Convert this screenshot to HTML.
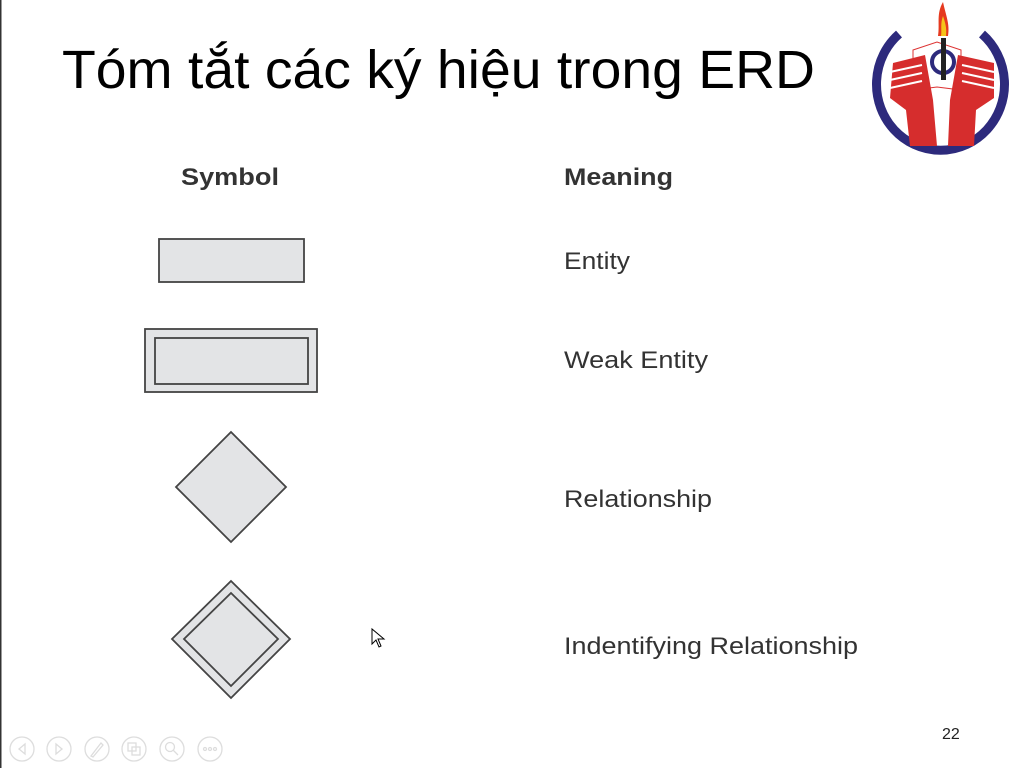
<!DOCTYPE html><html><head><meta charset="utf-8"><style>html,body{margin:0;padding:0;background:#fff}svg{display:block}</style></head><body>
<svg width="1024" height="768" xmlns="http://www.w3.org/2000/svg">
<rect x="0" y="0" width="1.5" height="768" fill="#333"/>
<text x="62" y="88" font-family="Liberation Sans, sans-serif" font-size="54" fill="#000" textLength="753" lengthAdjust="spacingAndGlyphs">Tóm tắt các ký hiệu trong ERD</text>
<g font-family="Liberation Sans, sans-serif" fill="#333">
<text x="181" y="185" font-size="24" font-weight="bold" textLength="98" lengthAdjust="spacingAndGlyphs">Symbol</text>
<text x="564" y="185" font-size="24" font-weight="bold" textLength="109" lengthAdjust="spacingAndGlyphs">Meaning</text>
<text x="564" y="269" font-size="24" textLength="66" lengthAdjust="spacingAndGlyphs">Entity</text>
<text x="564" y="368" font-size="24" textLength="144" lengthAdjust="spacingAndGlyphs">Weak Entity</text>
<text x="564" y="507" font-size="24" textLength="148" lengthAdjust="spacingAndGlyphs">Relationship</text>
<text x="564" y="654" font-size="24" textLength="294" lengthAdjust="spacingAndGlyphs">Indentifying Relationship</text>
</g>
<g stroke="#444" stroke-width="1.8" fill="#e3e4e6">
<rect x="159" y="239" width="145" height="43"/>
<rect x="145" y="329" width="172" height="63"/>
<rect x="155" y="338" width="153" height="46"/>
<polygon points="231,432 286,487 231,542 176,487"/>
<polygon points="231,581 290,639 231,698 172,639"/>
<polygon points="231,593 278,639 231,686 184,639"/>
</g>
<path d="M372,629 L372,644 L376,640 L379,647 L381,646 L378,639 L384,639 Z" fill="#fff" stroke="#000" stroke-width="1"/>
<text x="942" y="739" font-family="Liberation Sans, sans-serif" font-size="16" fill="#222">22</text>
<path d="M899,34 A64,66 0 1 0 982,34" fill="none" stroke="#2d2a7c" stroke-width="9"/>
<path d="M913,50 L937,42 L961,50 L961,90 L937,87 L913,90 Z" fill="#fff" stroke="#d33" stroke-width="1"/>
<circle cx="943" cy="62" r="11" fill="none" stroke="#2d2a7c" stroke-width="4"/>
<rect x="941" y="38" width="5" height="42" fill="#222"/>
<path d="M943,2 C936,14 940,24 938,36 L948,36 C950,24 946,16 943,2Z" fill="#e63a1f"/>
<path d="M943,16 C940,24 942,30 941,36 L946,36 C947,28 945,22 943,16Z" fill="#f5c41a"/>
<path d="M893,63 L925,55 L933,100 L937,146 L910,146 L906,110 L890,98 Z" fill="#d62d2d"/>
<path d="M994,63 L958,55 L950,100 L948,146 L974,146 L976,110 L994,98 Z" fill="#d62d2d"/>
<g stroke="#fff" stroke-width="2"><line x1="890" y1="72" x2="922" y2="65"/><line x1="890" y1="80" x2="922" y2="73"/><line x1="890" y1="88" x2="922" y2="81"/><line x1="994" y1="72" x2="962" y2="65"/><line x1="994" y1="80" x2="962" y2="73"/><line x1="994" y1="88" x2="962" y2="81"/></g>
<g fill="none" stroke="#ddd" stroke-width="1.3">
<circle cx="22" cy="749" r="12"/><circle cx="59" cy="749" r="12"/><circle cx="97" cy="749" r="12"/><circle cx="134" cy="749" r="12"/><circle cx="172" cy="749" r="12"/><circle cx="210" cy="749" r="12"/>
<path d="M25,744 L19,749 L25,754Z"/><path d="M56,744 L62,749 L56,754Z"/>
<path d="M91,756 L101,743 L103,745 L93,757Z"/>
<rect x="128" y="743" width="8" height="8"/><rect x="132" y="747" width="8" height="8"/>
<circle cx="170" cy="747" r="4.5"/><line x1="173" y1="750" x2="178" y2="755"/>
<circle cx="205" cy="749" r="1.5"/><circle cx="210" cy="749" r="1.5"/><circle cx="215" cy="749" r="1.5"/>
</g>
</svg>
</body></html>
